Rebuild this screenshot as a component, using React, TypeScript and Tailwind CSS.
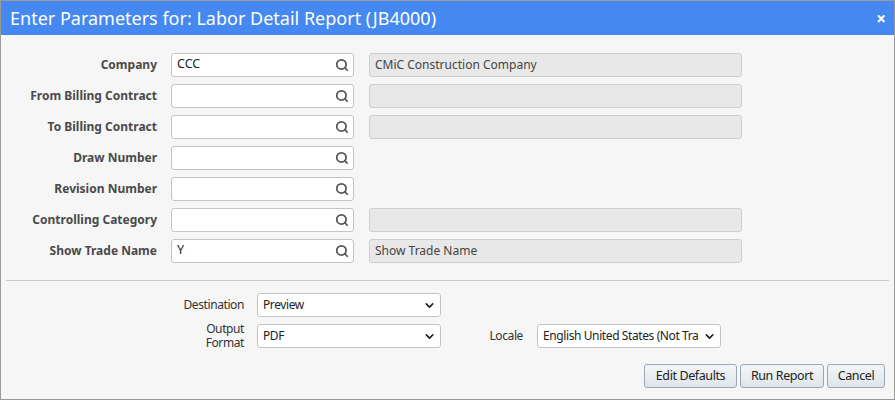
import { Search, ChevronDown } from "lucide-react";

const rows = [
  { label: "Company", value: "CCC", desc: "CMiC Construction Company", box: true },
  { label: "From Billing Contract", value: "", desc: "", box: true },
  { label: "To Billing Contract", value: "", desc: "", box: true },
  { label: "Draw Number", value: "", desc: "", box: false },
  { label: "Revision Number", value: "", desc: "", box: false },
  { label: "Controlling Category", value: "", desc: "", box: true },
  { label: "Show Trade Name", value: "Y", desc: "Show Trade Name", box: true },
];

const Select = ({ value, w }: { value: string; w: string }) => (
  <div className={`${w} h-[24px] bg-white border border-[#c4c4c4] rounded-[3px] flex items-center pl-[5px] pr-[4px] text-[12px] text-[#222] tracking-[-0.4px]`}>
    <span className="flex-1 whitespace-nowrap overflow-hidden">{value}</span>
    <ChevronDown className="w-[13px] h-[13px] text-[#222] shrink-0" strokeWidth={3} />
  </div>
);

const Btn = ({ label, w }: { label: string; w: string }) => (
  <button className={`${w} h-[24px] rounded-[3px] border border-[#9aa6b2] bg-gradient-to-b from-[#f4f6f8] to-[#dfe5ea] text-[12.5px] text-[#222] tracking-[-0.4px]`}>
    {label}
  </button>
);

export default function App() {
  return (
    <div className="w-[895px] h-[400px] border border-[#9a9a9a] bg-[#f6f6f6] flex flex-col font-[family-name:'Liberation_Sans',Arial,sans-serif]">
      {/* title bar */}
      <div className="h-[34px] bg-[#4488f0] flex items-center pl-[9px] pr-[8px] text-white">
        <span className="flex-1 text-[18px]">Enter Parameters for: Labor Detail Report (JB4000)</span>
        <span className="text-[17px] font-bold leading-none">×</span>
      </div>

      <div className="flex flex-col gap-[8px] pt-[18px]">
        {rows.map((r) => (
          <div key={r.label} className="flex items-center h-[23px]">
            <div className="w-[156px] text-right text-[12px] font-bold text-[#4a4a4a]">{r.label}</div>
            <div className="ml-[14px] w-[183px] h-[24px] bg-white border border-[#c4c4c4] rounded-[3px] flex items-center pl-[5px] pr-[4px] text-[12.5px] text-[#222]">
              <span className="flex-1">{r.value}</span>
              <Search className="w-[14px] h-[14px] text-[#555]" strokeWidth={3} />
            </div>
            {r.box && (
              <div className="ml-[15px] w-[373px] h-[24px] bg-[#e8e8e8] border border-[#cfcfcf] rounded-[3px] flex items-center pl-[5px] text-[12px] text-[#444]">
                {r.desc}
              </div>
            )}
          </div>
        ))}
      </div>

      <div className="mt-[18px] mx-[5px] border-t border-[#c8c8c8]" />

      <div className="flex flex-col pt-[12px] text-[12px] text-[#333] tracking-[-0.4px]">
        <div className="flex items-center h-[24px]">
          <div className="w-[243px] text-right">Destination</div>
          <div className="ml-[13px]"><Select value="Preview" w="w-[184px]" /></div>
        </div>
        <div className="flex items-center h-[28px] mt-[5px]">
          <div className="w-[243px] text-right leading-[14px]">Output<br />Format</div>
          <div className="ml-[13px]"><Select value="PDF" w="w-[184px]" /></div>
          <div className="ml-[42px] w-[40px] text-right">Locale</div>
          <div className="ml-[14px]"><Select value="English United States (Not Tra" w="w-[184px]" /></div>
        </div>
        <div className="flex justify-end gap-[3px] pr-[9px] mt-[14px]">
          <Btn label="Edit Defaults" w="w-[93px]" />
          <Btn label="Run Report" w="w-[84px]" />
          <Btn label="Cancel" w="w-[58px]" />
        </div>
      </div>
    </div>
  );
}
